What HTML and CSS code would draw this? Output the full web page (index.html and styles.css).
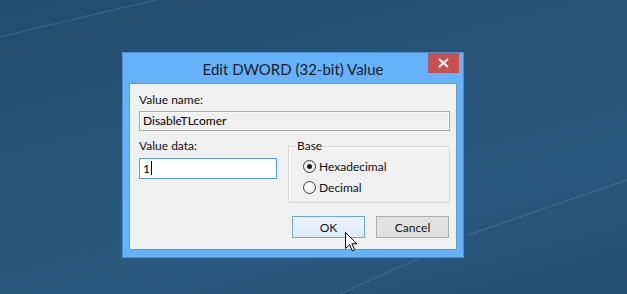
FILE: index.html
```html
<!DOCTYPE html>
<html lang="en">
<head>
    <meta charset="UTF-8">
    <meta name="viewport" content="width=device-width, initial-scale=1.0">
    <title>Edit DWORD (32-bit) Value</title>
    <link rel="stylesheet" href="styles.css">
</head>
<body>
    <div class="desktop">
        <!-- faint wallpaper streaks -->
        <svg class="wallpaper" width="627" height="294" viewBox="0 0 627 294">
            <path d="M0 37 Q 70 20 156 0" />
            <path d="M468 235 Q 540 210 627 180" />
            <path d="M340 294 Q 380 275 420 258" />
        </svg>

        <!-- Dialog window -->
        <div class="window">
            <div class="titlebar">
                <span></span>
                <span class="title">Edit DWORD (32-bit) Value</span>
                <button class="close" aria-label="Close">
                    <svg width="11" height="10" viewBox="0 0 11 10"><path d="M1 1 L10 9 M10 1 L1 9" /></svg>
                </button>
            </div>

            <div class="client">
                <div class="label">Value name:</div>
                <div class="field field-readonly">DisableTLcomer</div>

                <div class="data-row">
                    <div class="data-col">
                        <div class="label">Value data:</div>
                        <div class="field field-focus">1<span class="caret"></span></div>
                    </div>
                    <fieldset class="groupbox">
                        <legend>Base</legend>
                        <div class="radio-row"><span class="radio checked"></span>Hexadecimal</div>
                        <div class="radio-row"><span class="radio"></span>Decimal</div>
                    </fieldset>
                </div>

                <div class="buttons">
                    <button class="btn btn-default">OK</button>
                    <button class="btn">Cancel</button>
                </div>
            </div>
        </div>

        <!-- mouse pointer -->
        <svg class="cursor" width="13" height="20" viewBox="0 0 13 20">
            <path d="M0.5 0.5 L0.5 16.5 L4.5 12.7 L7.3 18.8 L9.6 17.8 L6.9 11.8 L11.8 11.8 Z" />
        </svg>
    </div>
</body>
</html>
```

FILE: styles.css
```css
body { margin: 0; font-family: Lato, "Liberation Sans", sans-serif; font-size: 12px; color: #000; }

/* Desktop behind the dialog */
.desktop {
    position: relative;
    width: 627px; height: 294px; overflow: hidden;
    box-sizing: border-box;
    padding: 52px 0 0 122px;
    background: linear-gradient(165deg, #244c6c 0%, #29567a 45%, #2b5a80 70%, #244d70 100%);
}
.wallpaper { position: absolute; top: 0; left: 0; }
.wallpaper path { fill: none; stroke: rgba(150, 190, 220, 0.22); stroke-width: 1; }

/* Window frame */
.window {
    position: relative;
    width: 342px;
    box-sizing: border-box;
    border: 1px solid #4a8fd2;
    background: #65b2fa;
    padding: 0 6px 7px 6px;
}
.titlebar { display: grid; grid-template-columns: 28px 1fr 28px; height: 30px; margin: 0 -2px 0 -2px; }
.title { text-align: center; font-size: 15px; line-height: 30px; color: #1d1d1d; padding-top: 1px; }
.close {
    width: 31px; height: 20px; margin-left: -3px;
    border: none; padding: 0; background: #c75050;
    display: flex; align-items: center; justify-content: center;
}
.close path { stroke: #fff; stroke-width: 2; fill: none; }

/* Client area */
.client {
    border: 1px solid #5b9ad6;
    background: #f0f0f0;
    padding: 8px 6px 11px 9px;
}
.label { line-height: 16px; color: #111; }

.field { box-sizing: border-box; height: 20px; line-height: 18px; padding: 0 3px; border: 1px solid #a9a9a9; }
.field-readonly { margin-top: 3px; background: #f0f0f0; box-shadow: inset 0 0 0 1px #fafafa; }
.field-focus { margin-top: 4px; height: 21px; line-height: 19px; background: #fff; border-color: #569de5; }
.caret { display: inline-block; width: 1px; height: 14px; background: #000; vertical-align: -2px; margin-left: 1px; }

.data-row { display: flex; gap: 11px; margin-top: 7px; }
.data-col { width: 138px; }

/* Base group box */
.groupbox {
    width: 162px; box-sizing: border-box;
    margin: 0; padding: 2px 0 4px 14px;
    border: 1px solid #d8d8d8;
    box-shadow: inset 1px 1px 0 #fafafa;
}
.groupbox legend { padding: 0 1px; margin-left: -7px; line-height: 16px; color: #111; }
.radio-row { display: flex; align-items: center; gap: 3px; height: 21px; color: #111; }
.radio {
    width: 11px; height: 11px; border-radius: 50%;
    border: 1px solid #3a3a3a;
    background: radial-gradient(circle at 40% 35%, #ffffff, #e8e8e8);
    display: flex; align-items: center; justify-content: center;
}
.radio.checked::after { content: ""; width: 5px; height: 5px; border-radius: 50%; background: #1a1a1a; }

/* Buttons */
.buttons { display: flex; justify-content: flex-end; gap: 11px; margin-top: 13px; margin-right: 1px; }
.btn {
    width: 73px; height: 22px;
    font-family: inherit; font-size: 12px; color: #111;
    border: 1px solid #adadad; background: #e1e1e1; padding: 0;
}
.btn-default { border-color: #6ea7e3; background: linear-gradient(#ecf4fc, #dcecfc); }

.cursor { position: absolute; left: 345px; top: 232px; }
.cursor path { fill: #fff; stroke: #000; stroke-width: 1; stroke-linejoin: miter; }
```
